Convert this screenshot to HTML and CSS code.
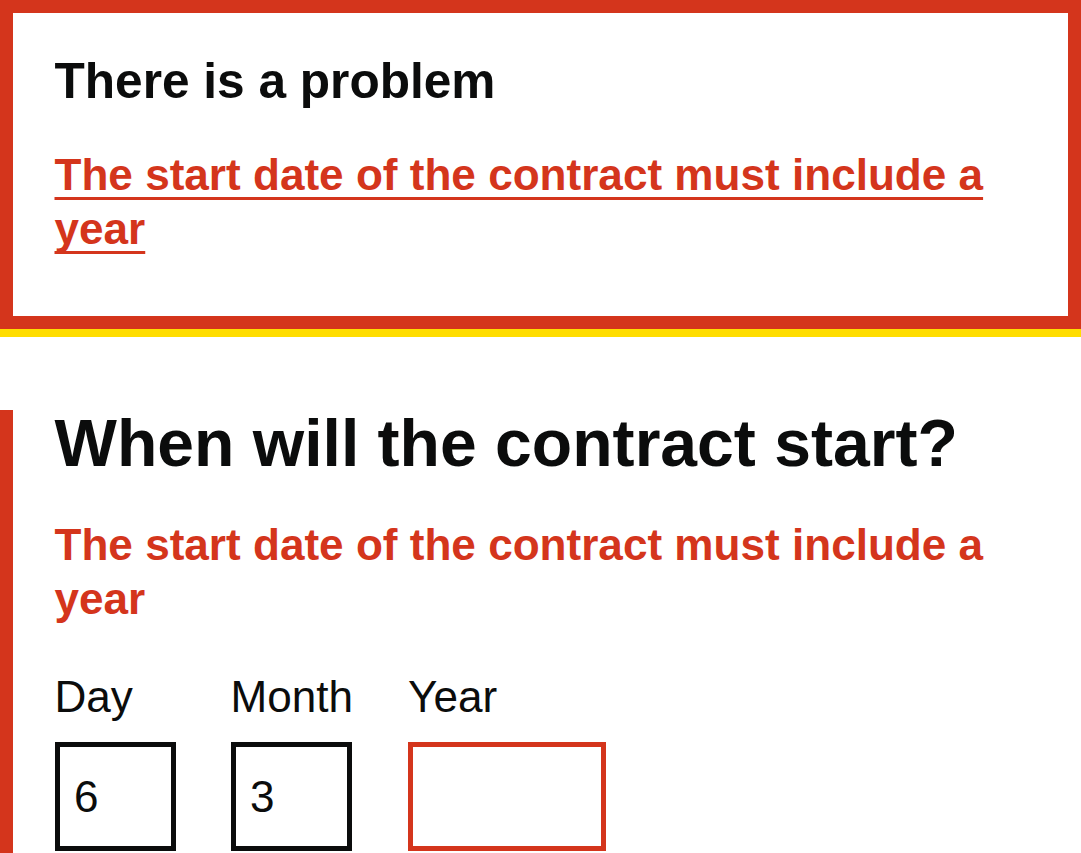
FILE: index.html
```html
<!DOCTYPE html>
<html lang="en">
<head>
<meta charset="utf-8">
<title>When will the contract start?</title>
<link rel="stylesheet" href="styles.css">
</head>
<body>
<div class="error-summary" role="alert" tabindex="-1">
  <h2 class="error-summary__title">There is a problem</h2>
  <ul class="error-summary__list">
    <li><a href="#year">The start date of the contract must include a year</a></li>
  </ul>
</div>
<div class="form-group form-group--error">
  <fieldset class="fieldset">
    <legend class="legend">When will the contract start?</legend>
    <p class="error-message">The start date of the contract must include a year</p>
    <div class="date-input">
      <div class="date-input__item">
        <label class="label" for="day">Day</label>
        <input class="input input--w2" id="day" type="text" value="6">
      </div>
      <div class="date-input__item">
        <label class="label" for="month">Month</label>
        <input class="input input--w2" id="month" type="text" value="3">
      </div>
      <div class="date-input__item">
        <label class="label" for="year">Year</label>
        <input class="input input--w4 input--error" id="year" type="text" value="">
      </div>
    </div>
  </fieldset>
</div>
</body>
</html>
```
FILE: styles.css
```css
html, body {
  margin: 0;
  padding: 0;
  background: #ffffff;
}
body {
  font-family: "Liberation Sans", Arial, sans-serif;
  color: #0b0c0c;
  overflow: hidden;
}
.error-summary {
  box-sizing: border-box;
  width: 100%;
  border: 13.5px solid #d4351c;
  padding: 40.5px 40.5px 40.5px 41.5px;
  margin-bottom: 81px;
  outline: 8px solid #ffdd00;
}
.error-summary__title {
  margin: 0 0 40.5px;
  font-size: 49.6px;
  line-height: 54px;
  font-weight: 700;
}
.error-summary__list {
  list-style: none;
  margin: 0 0 19.5px;
  padding: 0;
}
.error-summary__list li {
  margin: 0;
}
.error-summary__list a {
  color: #d4351c;
  font-size: 44.1px;
  line-height: 54px;
  font-weight: 700;
  text-decoration: underline;
  text-decoration-thickness: 2.7px;
  text-underline-offset: 0.17em;
  text-decoration-skip-ink: none;
}
.form-group--error {
  border-left: 13.5px solid #d4351c;
  padding-left: 41.5px;
  padding-bottom: 40px;
}
.fieldset {
  margin: 0;
  padding: 0;
  border: 0;
  min-width: 0;
}
.legend {
  padding: 0;
  margin: 0 0 40.5px;
  font-size: 66.1px;
  line-height: 67.5px;
  font-weight: 700;
}
.error-message {
  max-width: 960px;
  margin: 0 0 43.5px;
  color: #d4351c;
  font-size: 44.1px;
  line-height: 54px;
  font-weight: 700;
}
.date-input {
  display: flex;
  gap: 55px;
}
.date-input__item {
  display: flex;
  flex-direction: column;
}
.label {
  display: block;
  font-size: 44.1px;
  line-height: 54px;
  margin-bottom: 18.5px;
}
.input {
  box-sizing: border-box;
  height: 109px;
  border: 5.4px solid #0b0c0c;
  border-radius: 0;
  padding: 5.4px 14.5px;
  font-family: "Liberation Sans", Arial, sans-serif;
  font-size: 44.1px;
  color: #0b0c0c;
  background: #ffffff;
  margin: 0;
}
.input--w2 {
  width: 121px;
}
.input--w4 {
  width: 198px;
}
.input--error {
  border-color: #d4351c;
}
```
